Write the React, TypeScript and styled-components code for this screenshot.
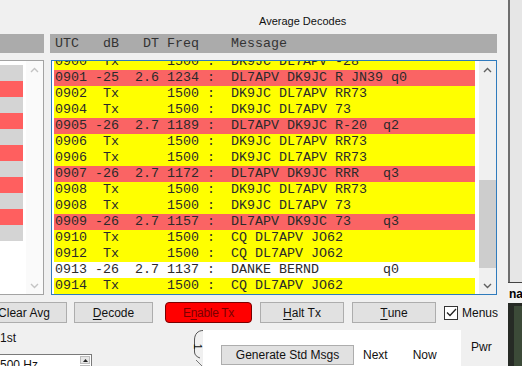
import React, { FC } from 'react';
import styled, { createGlobalStyle } from 'styled-components';

const GlobalStyle = createGlobalStyle`
  html, body {
    margin: 0;
    padding: 0;
    background: #f0f0f0;
    overflow: hidden;
  }
  * {
    box-sizing: border-box;
  }
`;

const ui = `'Segoe UI', 'Liberation Sans', Arial, sans-serif`;
const mono = `'Liberation Mono', 'Courier New', monospace`;

const Screen = styled.div`
  width: 522px;
  height: 366px;
  display: flex;
  overflow: hidden;
  background: #f0f0f0;
  font-family: ${ui};
  font-size: 11px;
  color: #000;
`;

const MainWindow = styled.div`
  width: 508px;
  height: 366px;
  display: flex;
  flex-direction: column;
  overflow: hidden;
  & > * {
    flex-shrink: 0;
  }
`;

const TitleRow = styled.div`
  height: 34px;
  padding: 14px 0 0 259px;
  line-height: 15px;
  font-size: 11px;
  color: #111;
`;

const Panes = styled.div`
  display: flex;
  gap: 6px;
  height: 261px;
`;

const Pane = styled.div<{ $width: number }>`
  width: ${p => p.$width}px;
  display: flex;
  flex-direction: column;
`;

const Header = styled.div`
  height: 19px;
  flex-shrink: 0;
  background: #ababab;
  font-family: ${mono};
  font-size: 13.33px;
  line-height: 19px;
  color: #333;
  white-space: pre;
  padding-left: 5px;
  overflow: hidden;
`;

const ListBox = styled.div<{ $focused?: boolean }>`
  margin-top: 7px;
  flex: 1;
  display: flex;
  background: #fff;
  border: 1px solid ${p => (p.$focused ? '#2f7bbd' : '#a3a3a3')};
  overflow: hidden;
`;

const LeftListBox = styled(ListBox)`
  border-left: none;
`;

const RightListBox = styled(ListBox)`
  margin-left: 1px;
`;

const BlockRows = styled.div`
  width: 23px;
  padding-top: 4px;
  display: flex;
  flex-direction: column;
`;

const Block = styled.div<{ $hot: boolean }>`
  height: 16px;
  flex-shrink: 0;
  background: ${p => (p.$hot ? '#ff5f5f' : '#d4d4d4')};
`;

const Rows = styled.div`
  width: 421px;
  margin: -7px 0 0 2px;
  display: flex;
  flex-direction: column;
`;

const Row = styled.div<{ $kind: 'tx' | 'rx' | 'plain' }>`
  height: 16px;
  flex-shrink: 0;
  line-height: 16px;
  padding-left: 1px;
  font-family: ${mono};
  font-size: 13.33px;
  color: #2a2a2a;
  white-space: pre;
  background: ${p =>
    p.$kind === 'tx' ? '#ffff00' : p.$kind === 'rx' ? '#fa6464' : '#ffffff'};
`;

const ScrollBar = styled.div<{ $disabled?: boolean }>`
  width: 17px;
  margin-left: auto;
  display: flex;
  flex-direction: column;
  background: ${p => (p.$disabled ? '#fafafa' : '#f0f0f0')};
`;

const ScrollButton = styled.div`
  height: 17px;
  flex-shrink: 0;
  display: flex;
  align-items: center;
  justify-content: center;
`;

const Track = styled.div`
  flex: 1;
`;

const Thumb = styled.div`
  width: 100%;
  background: #cdcdcd;
`;

const ButtonRow = styled.div`
  margin-top: 7px;
  height: 21px;
  display: flex;
  align-items: stretch;
`;

const Button = styled.div<{ $width: number; $gap?: number }>`
  width: ${p => p.$width}px;
  margin-left: ${p => p.$gap ?? 8}px;
  flex-shrink: 0;
  display: flex;
  align-items: center;
  justify-content: center;
  background: #e1e1e1;
  border: 1px solid #adadad;
  font-size: 12px;
  color: #111;
  white-space: nowrap;
  u {
    text-decoration-thickness: 1px;
    text-underline-offset: 2px;
  }
`;

const AlertButton = styled(Button)`
  background: #ff0000;
  border: 1px solid #7a0000;
  border-radius: 4px;
  color: #7a0000;
  letter-spacing: -0.3px;
`;

const CheckLabel = styled.label`
  margin-left: 8px;
  display: flex;
  align-items: center;
  gap: 4px;
  font-size: 12px;
  color: #111;
`;

const CheckBox = styled.span`
  width: 14px;
  height: 14px;
  border: 1px solid #333;
  background: #fff;
  display: flex;
  align-items: center;
  justify-content: center;
`;

const BottomArea = styled.div`
  height: 43px;
  display: flex;
  overflow: hidden;
`;

const LeftControls = styled.div`
  width: 92px;
  display: flex;
  flex-direction: column;
  flex-shrink: 0;
`;

const FieldLabel = styled.div`
  margin-top: 8px;
  line-height: 14px;
  font-size: 12px;
  color: #111;
`;

const SpinBox = styled.div`
  margin-top: 9px;
  height: 22px;
  flex-shrink: 0;
  display: flex;
  background: #fff;
  border: 1px solid #7a7a7a;
  border-left: none;
`;

const SpinText = styled.div`
  flex: 1;
  padding-top: 3px;
  font-size: 12px;
  color: #111;
`;

const SpinButtons = styled.div`
  width: 11px;
  display: flex;
  flex-direction: column;
  gap: 1px;
  padding: 1px 1px 0 0;
`;

const SpinArrow = styled.div`
  height: 8px;
  flex-shrink: 0;
  background: #e6e6e6;
  border: 1px solid #bcbcbc;
  display: flex;
  align-items: center;
  justify-content: center;
`;

const TabWidget = styled.div`
  margin-left: 98px;
  margin-top: 7px;
  display: flex;
  flex-shrink: 0;
`;

const TabStrip = styled.div`
  width: 13px;
  position: relative;
`;

const TabCaption = styled.span`
  position: absolute;
  left: 5px;
  top: 11px;
  font-size: 10px;
  transform: rotate(90deg);
  color: #111;
`;

const TabPanel = styled.div`
  width: 258px;
  background: #fff;
  display: flex;
  align-items: flex-start;
  padding: 15px 0 0 18px;
`;

const PanelButton = styled(Button)`
  height: 20px;
  margin-left: 0;
`;

const PanelText = styled.span<{ $gap: number }>`
  margin-left: ${p => p.$gap}px;
  line-height: 20px;
  font-size: 12px;
  color: #111;
`;

const PwrLabel = styled.div`
  margin: 17px 0 0 10px;
  line-height: 15px;
  font-size: 12px;
  color: #111;
`;

const SideStrip = styled.div`
  width: 14px;
  display: flex;
  flex-direction: column;
  & > * {
    flex-shrink: 0;
  }
`;

const BackWindow = styled.div`
  height: 282px;
  background: #e6e6e6;
  border-left: 2px solid #6e6e6e;
`;

const BackTitle = styled.div`
  height: 21px;
  border-top: 1px solid #444;
  background: #f2f2f2;
  font-family: 'Liberation Sans', Arial, sans-serif;
  font-weight: bold;
  font-size: 12px;
  line-height: 22px;
  padding-left: 1px;
  white-space: nowrap;
  overflow: hidden;
`;

const BackCanvas = styled.div`
  flex: 1;
  flex-shrink: 1;
  background: #262a25;
  padding: 3px 0 0 6px;
  display: flex;
`;

const CanvasInner = styled.div`
  flex: 1;
  background: #3c4a38;
`;

type Kind = 'tx' | 'rx' | 'plain';

const line = (utc: string, db: string, dt: string, freq: string, msg: string, q?: string) =>
  `${utc} ${db.padStart(3)} ${dt.padStart(4)} ${freq} :  ${q ? (msg + ' ').padEnd(19) + q : msg}`;

const decodes: { text: string; kind: Kind }[] = [
  { text: line('0900', 'Tx', '', '1500', 'DK9JC DL7APV -28'), kind: 'tx' },
  { text: line('0901', '-25', '2.6', '1234', 'DL7APV DK9JC R JN39', 'q0'), kind: 'rx' },
  { text: line('0902', 'Tx', '', '1500', 'DK9JC DL7APV RR73'), kind: 'tx' },
  { text: line('0904', 'Tx', '', '1500', 'DK9JC DL7APV 73'), kind: 'tx' },
  { text: line('0905', '-26', '2.7', '1189', 'DL7APV DK9JC R-20', 'q2'), kind: 'rx' },
  { text: line('0906', 'Tx', '', '1500', 'DK9JC DL7APV RR73'), kind: 'tx' },
  { text: line('0906', 'Tx', '', '1500', 'DK9JC DL7APV RR73'), kind: 'tx' },
  { text: line('0907', '-26', '2.7', '1172', 'DL7APV DK9JC RRR', 'q3'), kind: 'rx' },
  { text: line('0908', 'Tx', '', '1500', 'DK9JC DL7APV RR73'), kind: 'tx' },
  { text: line('0908', 'Tx', '', '1500', 'DK9JC DL7APV 73'), kind: 'tx' },
  { text: line('0909', '-26', '2.7', '1157', 'DL7APV DK9JC 73', 'q3'), kind: 'rx' },
  { text: line('0910', 'Tx', '', '1500', 'CQ DL7APV JO62'), kind: 'tx' },
  { text: line('0912', 'Tx', '', '1500', 'CQ DL7APV JO62'), kind: 'tx' },
  { text: line('0913', '-26', '2.7', '1137', 'DANKE BERND', 'q0'), kind: 'plain' },
  { text: line('0914', 'Tx', '', '1500', 'CQ DL7APV JO62'), kind: 'tx' },
];

const Chevron: FC<{ down?: boolean; color: string }> = ({ down, color }) => (
  <svg width="9" height="6" viewBox="0 0 9 6">
    <path
      d={down ? 'M1 1 L4.5 4.5 L8 1' : 'M1 5 L4.5 1.5 L8 5'}
      fill="none"
      stroke={color}
      strokeWidth="1.4"
    />
  </svg>
);

const Triangle: FC<{ down?: boolean }> = ({ down }) => (
  <svg width="5" height="3" viewBox="0 0 5 3">
    <path d={down ? 'M0 0 L5 0 L2.5 3 Z' : 'M0 3 L5 3 L2.5 0 Z'} fill="#222" />
  </svg>
);

const VScroll: FC<{ disabled?: boolean; thumbTop?: number; thumbSize?: number }> = ({
  disabled,
  thumbTop = 0,
  thumbSize = 0,
}) => {
  const color = disabled ? '#c4c4c4' : '#606060';
  return (
    <ScrollBar $disabled={disabled}>
      <ScrollButton>
        <Chevron color={color} />
      </ScrollButton>
      <Track>
        {!disabled && <Thumb style={{ marginTop: thumbTop, height: thumbSize }} />}
      </Track>
      <ScrollButton>
        <Chevron down color={color} />
      </ScrollButton>
    </ScrollBar>
  );
};

const App: FC = () => {
  return (
    <>
      <GlobalStyle />
      <Screen>
        <MainWindow>
          <TitleRow>Average Decodes</TitleRow>
          <Panes>
            <Pane $width={44}>
              <Header />
              <LeftListBox>
                <BlockRows>
                  {Array.from({ length: 11 }).map((_, i) => (
                    <Block key={i} $hot={i % 2 === 1} />
                  ))}
                </BlockRows>
                <VScroll disabled />
              </LeftListBox>
            </Pane>
            <Pane $width={447}>
              <Header>{'UTC   dB   DT Freq    Message'}</Header>
              <RightListBox $focused>
                <Rows>
                  {decodes.map((d, i) => (
                    <Row key={i} $kind={d.kind}>
                      {d.text}
                    </Row>
                  ))}
                </Rows>
                <VScroll thumbTop={102} thumbSize={88} />
              </RightListBox>
            </Pane>
          </Panes>

          <ButtonRow>
            <Button $width={86} $gap={-19}>Clear Avg</Button>
            <Button $width={79} $gap={7}>
              <u>D</u>ecode
            </Button>
            <AlertButton $width={87} $gap={12}>
              E<u>n</u>able Tx
            </AlertButton>
            <Button $width={84}>
              <u>H</u>alt Tx
            </Button>
            <Button $width={84}>
              <u>T</u>une
            </Button>
            <CheckLabel>
              <CheckBox>
                <svg width="11" height="9" viewBox="0 0 11 9">
                  <path d="M1 4.5 L4 7.5 L10 1" fill="none" stroke="#222" strokeWidth="1.3" />
                </svg>
              </CheckBox>
              Menus
            </CheckLabel>
          </ButtonRow>

          <BottomArea>
            <LeftControls>
              <FieldLabel>1st</FieldLabel>
              <SpinBox>
                <SpinText>500 Hz</SpinText>
                <SpinButtons>
                  <SpinArrow>
                    <Triangle />
                  </SpinArrow>
                  <SpinArrow>
                    <Triangle down />
                  </SpinArrow>
                </SpinButtons>
              </SpinBox>
            </LeftControls>

            <TabWidget>
              <TabStrip>
                <svg width="13" height="36" viewBox="0 0 13 36">
                  <path
                    d="M13 0.5 C8 0.5 4.5 4 4.5 10 L4.5 22 C4.5 25 7 27 10 28"
                    fill="none"
                    stroke="#555"
                    strokeWidth="1"
                  />
                  <path d="M6 30 L12 36" fill="none" stroke="#777" strokeWidth="1" />
                </svg>
                <TabCaption>1</TabCaption>
              </TabStrip>
              <TabPanel>
                <PanelButton $width={133}>Generate Std Msgs</PanelButton>
                <PanelText $gap={9}>Next</PanelText>
                <PanelText $gap={25}>Now</PanelText>
              </TabPanel>
            </TabWidget>

            <PwrLabel>Pwr</PwrLabel>
          </BottomArea>
        </MainWindow>

        <SideStrip>
          <BackWindow />
          <BackTitle>nap</BackTitle>
          <BackCanvas>
            <CanvasInner />
          </BackCanvas>
        </SideStrip>
      </Screen>
    </>
  );
};

export default App;
